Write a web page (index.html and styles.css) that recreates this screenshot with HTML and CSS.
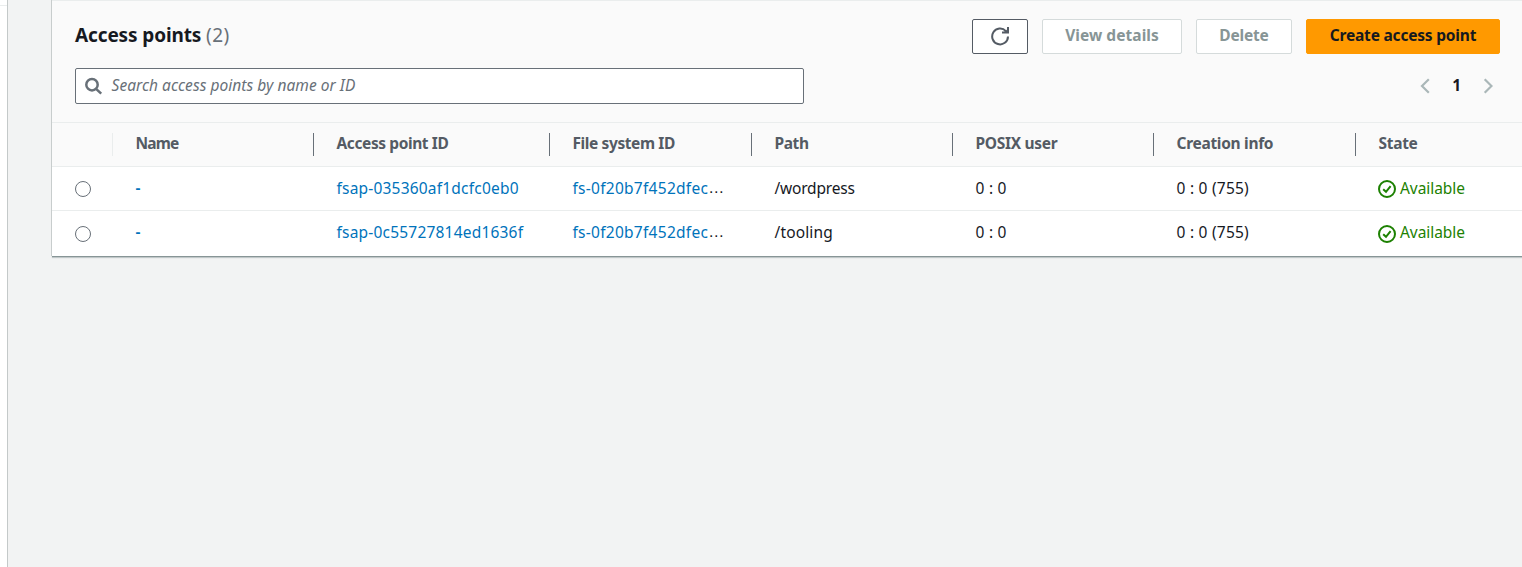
FILE: index.html
```html
<!DOCTYPE html>
<html lang="en">
<head>
<meta charset="utf-8">
<title>Access points</title>
<link rel="stylesheet" href="styles.css">
</head>
<body>
<div class="app">
  <aside class="side"></aside>
  <main class="main">
    <section class="panel">
      <header class="panel-head">
        <div class="title-row">
          <h2 class="title"><span class="t-main">Access points</span> <span class="count">(2)</span></h2>
          <div class="actions">
            <button class="btn refresh" aria-label="Refresh"><svg width="20" height="20" viewBox="0 0 20 20"><path d="M18 10.5A7.9 7.9 0 1 1 15.9 5.1M18 1V6.5H12" fill="none" stroke="currentColor" stroke-width="2"/><path d="M17.5 3V7H13.5Z" fill="currentColor"/></svg></button>
            <button class="btn view" disabled><span>View details</span></button>
            <button class="btn delete" disabled><span>Delete</span></button>
            <button class="btn primary"><span>Create access point</span></button>
          </div>
        </div>
        <div class="filter-row">
          <div class="search">
            <svg width="18" height="18" viewBox="0 0 18 18"><circle cx="7" cy="7.7" r="5.7"/><path d="M11.1 11.8L16.2 16.7"/></svg>
            <span class="placeholder">Search access points by name or ID</span>
          </div>
          <nav class="pager">
            <svg width="10" height="16" viewBox="0 0 10 16"><path d="M8.8 1.2L2 8L8.8 14.8"/></svg>
            <b>1</b>
            <svg width="10" height="16" viewBox="0 0 10 16"><path d="M1.7 1.2L8.5 8L1.7 14.8"/></svg>
          </nav>
        </div>
      </header>
      <div class="row head">
        <div class="cell pale"></div>
        <div class="cell"><span class="h-name">Name</span></div>
        <div class="cell"><span class="h-ap">Access point ID</span></div>
        <div class="cell"><span class="h-ap">File system ID</span></div>
        <div class="cell"><span class="h-ap">Path</span></div>
        <div class="cell"><span>POSIX user</span></div>
        <div class="cell"><span>Creation info</span></div>
        <div class="cell"><span>State</span></div>
      </div>
      <div class="row first">
        <div class="cell pick"><i class="radio"></i></div>
        <div class="cell"><a class="dash">-</a></div>
        <div class="cell"><a class="id">fsap-035360af1dcfc0eb0</a></div>
        <div class="cell"><a class="id fs">fs-0f20b7f452dfec</a><span class="more">…</span></div>
        <div class="cell"><span class="wp">/wordpress</span></div>
        <div class="cell"><span class="num">0 : 0</span></div>
        <div class="cell"><span class="num">0 : 0 (755)</span></div>
        <div class="cell ok"><svg width="18" height="18" viewBox="0 0 18 18"><circle cx="9" cy="9" r="8"/><path d="M5.2 9.2L8 11.8L12.6 6.2"/></svg><span>Available</span></div>
      </div>
      <div class="row last">
        <div class="cell pick"><i class="radio"></i></div>
        <div class="cell"><a class="dash">-</a></div>
        <div class="cell"><a class="id">fsap-0c55727814ed1636f</a></div>
        <div class="cell"><a class="id fs">fs-0f20b7f452dfec</a><span class="more">…</span></div>
        <div class="cell"><span class="tl">/tooling</span></div>
        <div class="cell"><span class="num">0 : 0</span></div>
        <div class="cell"><span class="num">0 : 0 (755)</span></div>
        <div class="cell ok"><svg width="18" height="18" viewBox="0 0 18 18"><circle cx="9" cy="9" r="8"/><path d="M5.2 9.2L8 11.8L12.6 6.2"/></svg><span>Available</span></div>
      </div>
    </section>
  </main>
</div>
</body>
</html>
```
FILE: styles.css
```css
* { box-sizing: border-box; }
body { margin: 0; background: #f2f3f3; color: #16191f; font: 15.5px/22px "Noto Sans", sans-serif; overflow: hidden; }
.app { display: flex; height: 567px; }
.side { flex: none; width: 8px; background: linear-gradient(#eaeded, #eaeded) 0 5px / 7px 1px no-repeat #fff; border-right: 1px solid #c4c9c9; }
.main { flex: 1; padding-left: 44px; min-width: 0; }
.panel { height: 256px; background: #fff; border-top: 1px solid #eaeded; box-shadow: 0 1px 0 #879596, -1px 0 0 #c8cdcd, 0 2px 1px rgba(0,28,36,.2); }
.panel-head { height: 122px; background: #fafafa; border-bottom: 1px solid #eaeded; padding: 18px 22px 0 23px; }
.title-row, .filter-row { display: flex; justify-content: space-between; }
.title { margin: 4px 0 0; font-size: 19px; line-height: 24px; white-space: nowrap; letter-spacing: -.12px; }
.count { font-weight: 400; color: #687078; letter-spacing: .4px; }
.actions { display: flex; gap: 14px; }
.btn { height: 35px; padding: 0 0 3px; border: 1px solid #d5dbdb; border-radius: 2px; background: #fff; color: #879596; font: 700 15.5px/22px "Noto Sans", sans-serif; letter-spacing: -.2px; white-space: nowrap; }
.refresh { width: 56px; padding: 0 0 2px; border-color: #545b64; color: #545b64; }
.refresh svg { display: block; margin: 0 auto; }
.view { width: 140px; letter-spacing: .05px; }
.delete { width: 96px; }
.primary { width: 194px; background: #ff9900; border-color: #ff9900; color: #16191f; }
.filter-row { margin-top: 14px; align-items: center; }
.search { width: 729px; height: 36px; border: 1px solid #687078; border-radius: 2px; background: #fff; display: flex; align-items: center; padding-left: 9px; gap: 8.5px; color: #687078; }
.search svg { fill: none; stroke: #687078; stroke-width: 2.5; }
.placeholder { font-style: italic; white-space: nowrap; padding-bottom: 2px; letter-spacing: .05px; }
.pager { display: flex; align-items: center; gap: 22px; padding-right: 7px; }
.pager b { padding-bottom: 2px; }
.pager svg { fill: none; stroke: #aab7b8; stroke-width: 2.2; }
.row { display: grid; grid-template-columns: 61px 201px 236px 202px 201px 201px 202px 1fr; align-items: center; height: 44px; border-bottom: 1px solid #eaeded; }
.head { background: #fafafa; color: #545b64; font-weight: 700; }
.last { height: 45px; border-bottom: 0; }
.cell { display: flex; align-items: center; padding-left: 22.5px; height: 23px; white-space: nowrap; letter-spacing: -.3px; }
.cell span, .cell a { padding-bottom: 2px; }
.head .cell span { padding-bottom: 3px; }
.last .cell span, .last .cell a { padding-bottom: 3px; }
.head .cell { border-right: 1px solid #687078; }
.head .pale { border-color: #eaeded; }
.head .cell:last-child { border: 0; }
.h-name { letter-spacing: -.8px; }
.h-ap { letter-spacing: -.4px; }
.id, .num { letter-spacing: .2px; }
.fs { letter-spacing: .27px; }
.num { word-spacing: .1px; }
.more { font-family: "Liberation Sans", sans-serif; font-size: 16px; letter-spacing: 0; }
.wp { letter-spacing: -.2px; }
.tl { letter-spacing: .15px; }
.dash { font-weight: 600; }
.pick { padding-top: 1px; padding-left: 23px; }
.radio { width: 16px; height: 16px; border: 1px solid #687078; border-radius: 50%; }
a { color: #0073bb; }
.ok { color: #1d8102; gap: 4px; padding-left: 22px; letter-spacing: -.05px; }
.ok svg { fill: none; stroke: #1d8102; stroke-width: 2; }
```
